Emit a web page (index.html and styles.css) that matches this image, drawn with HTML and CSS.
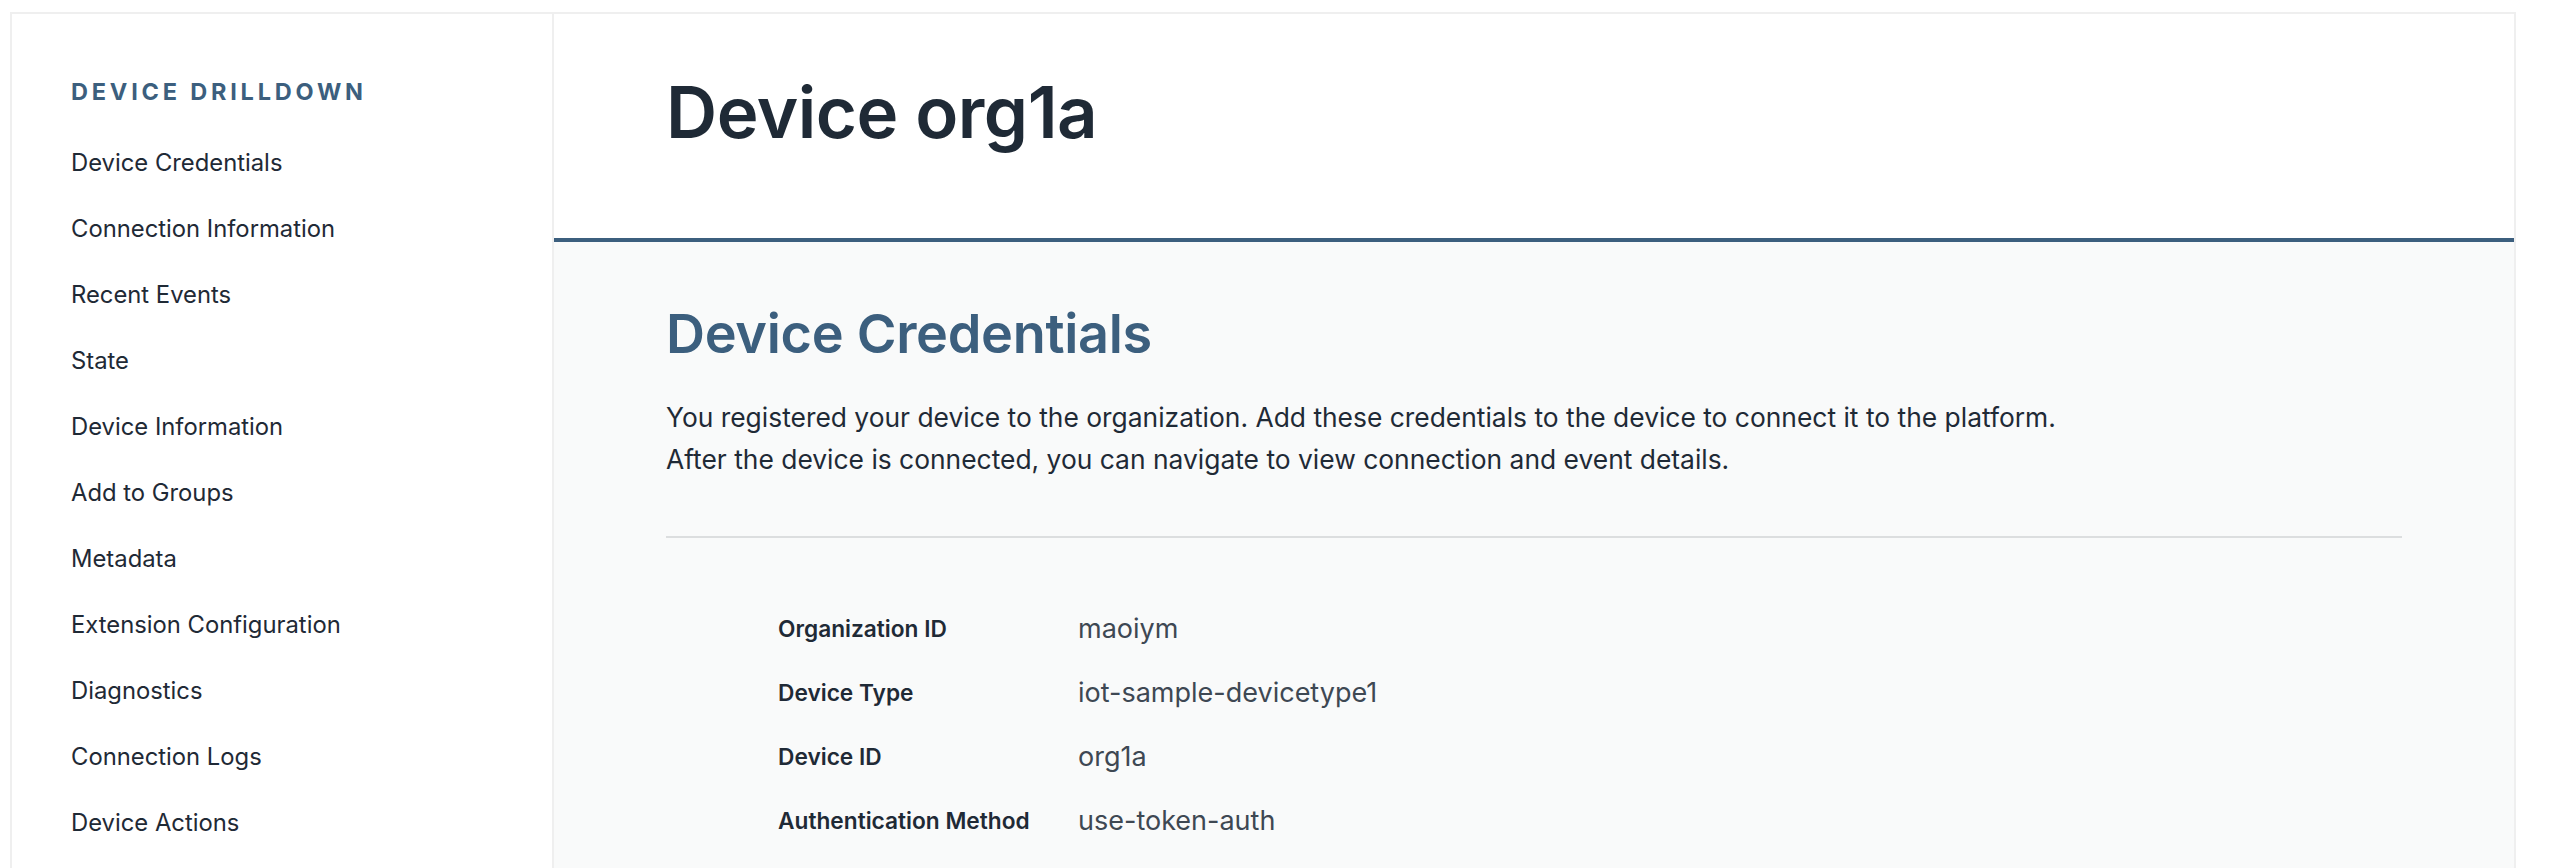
FILE: index.html
```html
<!DOCTYPE html>
<html lang="en">
<head>
<meta charset="utf-8">
<title>Device org1a</title>
<link rel="stylesheet" href="styles.css">
</head>
<body>
<div class="frame">
  <aside class="sidebar">
    <h3 class="sidebar-title">Device Drilldown</h3>
    <ul class="nav">
      <li>Device Credentials</li>
      <li>Connection Information</li>
      <li>Recent Events</li>
      <li>State</li>
      <li>Device Information</li>
      <li>Add to Groups</li>
      <li>Metadata</li>
      <li>Extension Configuration</li>
      <li>Diagnostics</li>
      <li>Connection Logs</li>
      <li>Device Actions</li>
    </ul>
  </aside>
  <main class="main">
    <header class="page-header">
      <h1 class="page-title">Device org1a</h1>
    </header>
    <section class="section">
      <h2 class="section-title">Device Credentials</h2>
      <p class="section-text">You registered your device to the organization. Add these credentials to the device to connect it to the platform.<br>After the device is connected, you can navigate to view connection and event details.</p>
      <hr class="divider">
      <dl class="details">
        <dt>Organization ID</dt><dd>maoiym</dd>
        <dt>Device Type</dt><dd>iot-sample-devicetype1</dd>
        <dt>Device ID</dt><dd>org1a</dd>
        <dt>Authentication Method</dt><dd>use-token-auth</dd>
      </dl>
    </section>
  </main>
</div>
</body>
</html>
```
FILE: styles.css
```css
* { box-sizing: border-box; }
html, body { margin: 0; padding: 0; background: #ffffff; }
body {
  font-family: "Inter", "Liberation Sans", sans-serif;
  color: #1f2a36;
}
.frame {
  display: flex;
  margin: 12px 34px 0 10px;
  border: 2px solid #efefef;
  border-bottom: none;
  min-height: 900px;
}
.sidebar {
  width: 540px;
  flex: 0 0 540px;
  padding: 63px 0 0 59px;
  background: #ffffff;
}
.sidebar-title {
  margin: 0 0 22.5px 0;
  font-size: 23.5px;
  line-height: 30px;
  font-weight: 700;
  letter-spacing: 3.8px;
  text-transform: uppercase;
  color: #3c5f7e;
}
.nav {
  list-style: none;
  margin: 0;
  padding: 0;
}
.nav li {
  font-size: 23.8px;
  line-height: 66px;
  color: #1f2a36;
}
.main {
  flex: 1 1 auto;
  border-left: 2px solid #efefef;
  background: #f9fafa;
  display: flex;
  flex-direction: column;
}
.page-header {
  height: 228px;
  padding: 63px 112px 0 112px;
  background: #ffffff;
  border-bottom: 4px solid #3c5f7e;
}
.page-title {
  margin: 0;
  font-size: 70.8px;
  line-height: 70px;
  font-weight: 600;
  letter-spacing: -0.5px;
  color: #1f2a36;
}
.section {
  padding: 58px 112px 0 112px;
}
.section-title {
  margin: 0;
  font-size: 54px;
  line-height: 67px;
  font-weight: 600;
  letter-spacing: -0.3px;
  color: #3c5f7e;
}
.section-text {
  margin: 29px 0 0 0;
  font-size: 26.4px;
  line-height: 42px;
  color: #1f2a36;
}
.divider {
  margin: 56px 0 0 0;
  border: none;
  height: 2px;
  background: #dcdedf;
}
.details {
  display: grid;
  grid-template-columns: 300px auto;
  grid-auto-rows: 64px;
  align-items: center;
  margin: 58.5px 0 0 112px;
}
.details dt {
  font-size: 22.7px;
  font-weight: 600;
  color: #1f2a36;
}
.details dd {
  margin: 0;
  font-size: 27px;
  color: #3e4853;
}
```
